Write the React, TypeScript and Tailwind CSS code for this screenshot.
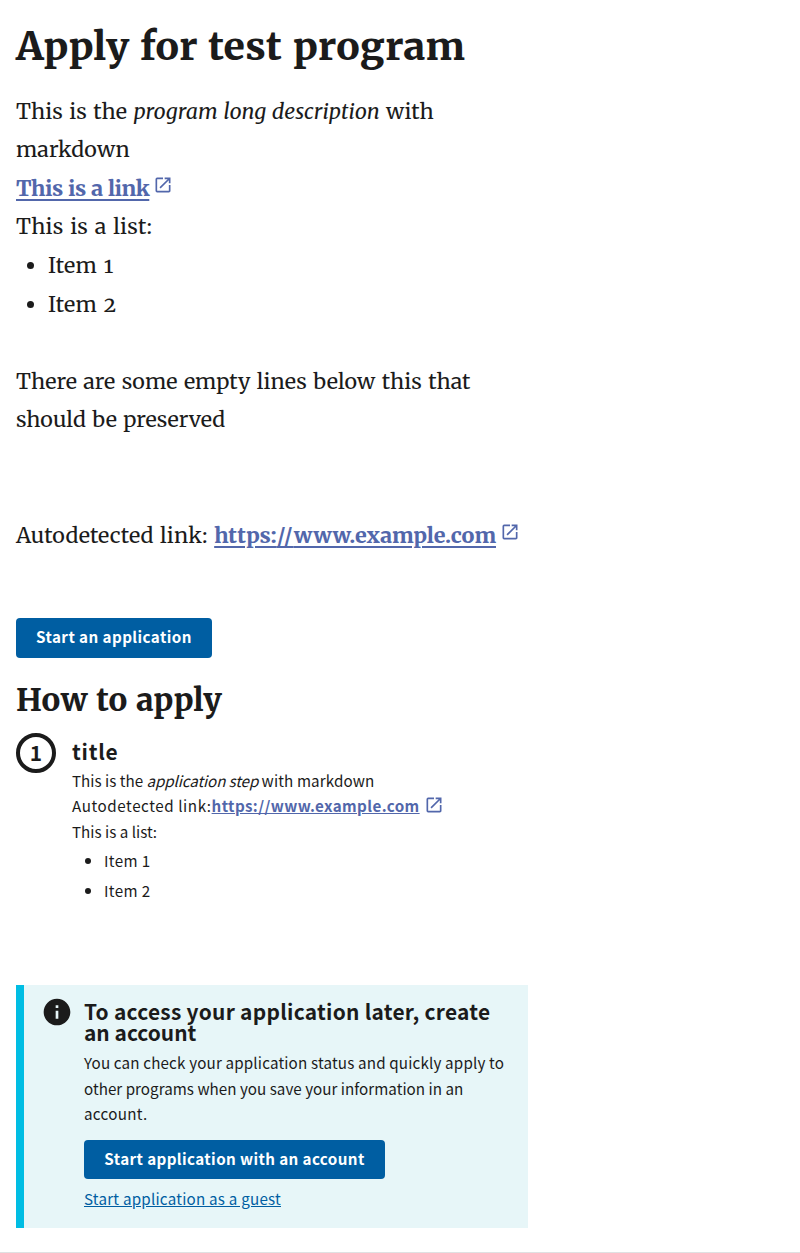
import React from "react";
import type { ReactNode } from "react";

const serif = "font-[Merriweather,'DejaVu_Serif_Condensed','Liberation_Serif',serif]";
const sans = "font-['Noto_Sans_CJK_SC','Open_Sans',sans-serif]";

function ExternalIcon({ className }: { className: string }) {
  return (
    <svg viewBox="0 0 24 24" className={`inline-block size-5 fill-current ${className}`} aria-hidden="true">
      <path d="M19 19H5V5h7V3H5a2 2 0 0 0-2 2v14a2 2 0 0 0 2 2h14c1.1 0 2-.9 2-2v-7h-2v7zM14 3v2h3.59l-9.83 9.83 1.41 1.41L19 6.41V10h2V3h-7z" />
    </svg>
  );
}

function Button({ children, className }: { children: ReactNode; className: string }) {
  return (
    <button
      className={`flex items-center justify-center rounded bg-[#005ea2] text-[15.2px] leading-none font-bold whitespace-nowrap text-white ${className}`}
    >
      {children}
    </button>
  );
}

export default function App() {
  return (
    <main className={`h-[1253px] w-full overflow-hidden border-b border-[#dfe1e2] bg-white px-4 text-[#1b1b1b] ${sans}`}>
      <div className="w-[512px]">
        <h1
          className={`pt-[23px] text-[39.04px] leading-[47px] font-extrabold tracking-[0.28px] whitespace-nowrap [word-spacing:1px] ${serif}`}
        >
          Apply for test program
        </h1>

        <div
          className={`mt-[22.7px] text-[21.44px] leading-[38.59px] tracking-[0.06px] whitespace-nowrap oldstyle-nums [word-spacing:1.3px] ${serif}`}
        >
          <p>
            This is the <em className="tracking-[0.03px] [word-spacing:0.8px]">program long description</em> with
            <br />
            markdown
          </p>
          <p className="text-[#5267ab]">
            <a className="font-extrabold tracking-[-0.45px] underline decoration-2 underline-offset-[3px] [word-spacing:0.6px]">
              This is a link
            </a>
            <ExternalIcon className="relative -top-[5px] ml-1" />
          </p>
          <p className="tracking-[0.25px]">This is a list:</p>
          <ul className="list-disc pl-8 tracking-[0.35px]">
            <li>Item 1</li>
            <li>Item 2</li>
          </ul>
          <p className="mt-[38.59px]">
            There are some empty lines below this that
            <br />
            <span className="tracking-[0.02px]">should be preserved</span>
          </p>
          <p className="mt-[77.18px]">
            <span className="tracking-[0.14px]">Autodetected link: </span>
            <span className="text-[#5267ab]">
              <a className="font-extrabold tracking-[-0.05px] underline decoration-2 underline-offset-[3px]">
                https:<span className="tracking-[1.2px]">//</span>www.example.com
              </a>
              <ExternalIcon className="relative -top-[5px] ml-1" />
            </span>
          </p>
        </div>

        <Button className="mt-[62.3px] h-10 w-[196px] pb-0.5 tracking-[0.43px]">Start an application</Button>

        <h2
          className={`mt-[22px] text-[31.2px] leading-[40px] font-extrabold tracking-[0.22px] [word-spacing:1px] ${serif}`}
        >
          How to apply
        </h2>

        <div className="mt-[13px] flex gap-4">
          <div className="flex size-10 shrink-0 items-center justify-center rounded-full border-4 border-[#1b1b1b] pb-px text-[20.9px] leading-none font-bold">
            1
          </div>
          <div className="text-[15.2px] leading-[25.44px] whitespace-nowrap">
            <h3 className="mt-[8px] mb-[5.6px] text-[20.9px] leading-[21px] font-bold tracking-[0.75px]">title</h3>
            <p>
              This is the <em className="tracking-[-0.12px]">application step</em>{" "}
              <span className="tracking-[0.12px]">with markdown</span>
            </p>
            <p>
              <span className="tracking-[0.56px]">Autodetected link:</span>
              <span className="text-[#5267ab]">
                <a className="font-bold tracking-[0.38px] underline">https://www.example.com</a>
                <ExternalIcon className="relative -top-[3px] ml-1" />
              </span>
            </p>
            <p>This is a list:</p>
            <ul className="mt-[4.4px] list-disc pl-8 tracking-[0.4px]">
              <li className="mb-1">Item 1</li>
              <li>Item 2</li>
            </ul>
          </div>
        </div>

        <section className="mt-[82px] flex h-[243px] border-l-8 border-[#00bde3] bg-[#e7f6f8] pt-[11px] pl-[17px]">
          <svg viewBox="0 0 24 24" className="size-8 shrink-0 fill-[#1b1b1b]" aria-hidden="true">
            <path d="M12 2C6.48 2 2 6.48 2 12s4.48 10 10 10 10-4.48 10-10S17.52 2 12 2zm1 15h-2v-6h2v6zm0-8h-2V7h2v2z" />
          </svg>
          <div className="ml-[11px] whitespace-nowrap">
            <h3 className="mt-[5px] text-[20.9px] leading-[21px] font-bold tracking-[0.28px]">
              To access your application later, create
              <br />
              <span className="tracking-[0.02px]">an account</span>
            </h3>
            <p className="mt-[7px] text-[15.2px] leading-[25.44px] tracking-[0.16px]">
              You can check your application status and quickly apply to
              <br />
              <span className="tracking-[0.02px]">other programs when you save your information in an</span>
              <br />
              <span className="tracking-[0.3px]">account.</span>
            </p>
            <Button className="mt-[13px] h-[39px] w-[301px] tracking-[0.39px]">Start application with an account</Button>
            <a className="mt-[7px] block text-[15.2px] leading-[25.44px] tracking-[0.22px] text-[#005ea2] underline">
              Start application as a guest
            </a>
          </div>
        </section>
      </div>
    </main>
  );
}
